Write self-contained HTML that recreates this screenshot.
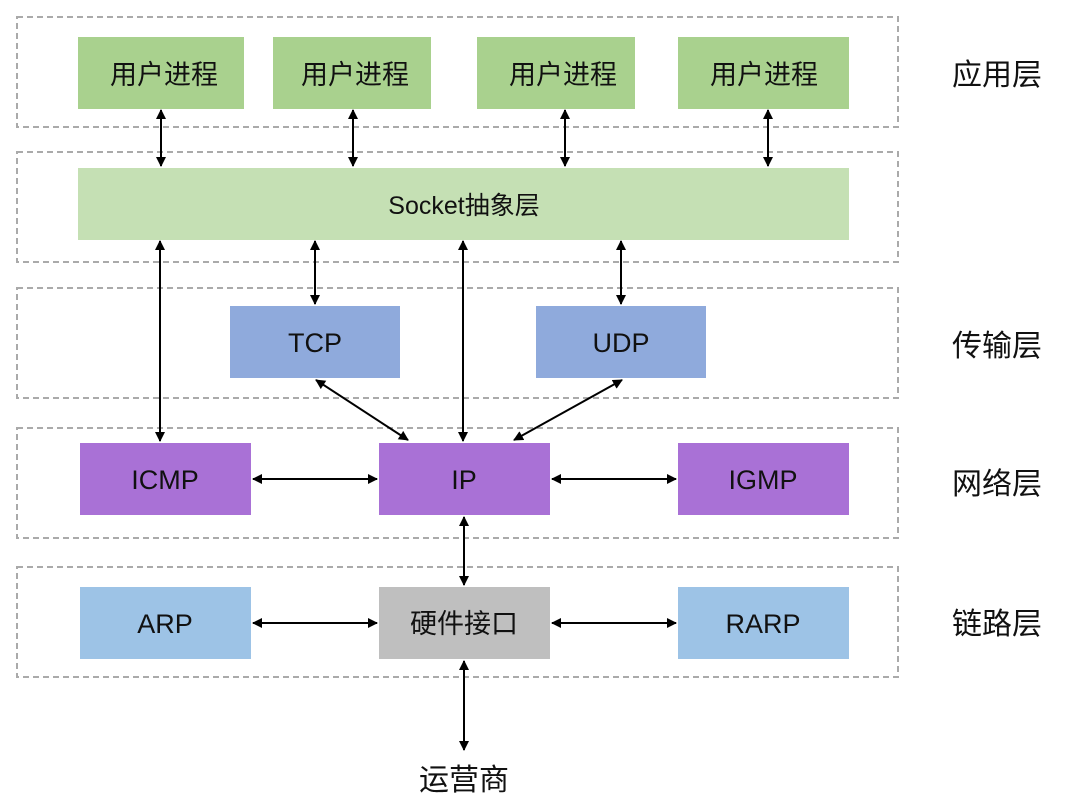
<!DOCTYPE html>
<html><head><meta charset="utf-8"><style>
html,body{margin:0;padding:0;background:#fff;}
svg{display:block;}
text{font-family:"Liberation Sans","Noto Sans CJK SC",sans-serif;fill:#111;}
</style></head><body>
<svg width="1074" height="810" viewBox="0 0 1074 810" xmlns="http://www.w3.org/2000/svg">
<defs>
<marker id="a" viewBox="0 0 10 10" refX="9" refY="5" markerWidth="10" markerHeight="10" markerUnits="userSpaceOnUse" orient="auto-start-reverse"><path d="M0,0 L10,5 L0,10 z" fill="#000"/></marker>
</defs>
<g fill="none" stroke="#aaa" stroke-width="2" stroke-dasharray="6,4">
<rect x="17" y="17" width="881" height="110"/>
<rect x="17" y="152" width="881" height="110"/>
<rect x="17" y="288" width="881" height="110"/>
<rect x="17" y="428" width="881" height="110"/>
<rect x="17" y="567" width="881" height="110"/>
</g>
<g>
<rect x="78" y="37" width="166" height="72" fill="#a9d18e"/>
<rect x="273" y="37" width="158" height="72" fill="#a9d18e"/>
<rect x="477" y="37" width="158" height="72" fill="#a9d18e"/>
<rect x="678" y="37" width="171" height="72" fill="#a9d18e"/>
<rect x="78" y="168" width="771" height="72" fill="#c5e0b4"/>
<rect x="230" y="306" width="170" height="72" fill="#8faadc"/>
<rect x="536" y="306" width="170" height="72" fill="#8faadc"/>
<rect x="80" y="443" width="171" height="72" fill="#a971d6"/>
<rect x="379" y="443" width="171" height="72" fill="#a971d6"/>
<rect x="678" y="443" width="171" height="72" fill="#a971d6"/>
<rect x="80" y="587" width="171" height="72" fill="#9dc3e6"/>
<rect x="379" y="587" width="171" height="72" fill="#bfbfbf"/>
<rect x="678" y="587" width="171" height="72" fill="#9dc3e6"/>
</g>
<g stroke="#000" stroke-width="2" marker-start="url(#a)" marker-end="url(#a)">
<line x1="161" y1="110" x2="161" y2="166"/>
<line x1="353" y1="110" x2="353" y2="166"/>
<line x1="565" y1="110" x2="565" y2="166"/>
<line x1="768" y1="110" x2="768" y2="166"/>
<line x1="160" y1="241" x2="160" y2="441"/>
<line x1="315" y1="241" x2="315" y2="304"/>
<line x1="463" y1="241" x2="463" y2="441"/>
<line x1="621" y1="241" x2="621" y2="304"/>
<line x1="316" y1="380" x2="408" y2="440"/>
<line x1="622" y1="380" x2="514" y2="440"/>
<line x1="253" y1="479" x2="377" y2="479"/>
<line x1="552" y1="479" x2="676" y2="479"/>
<line x1="464" y1="517" x2="464" y2="585"/>
<line x1="253" y1="623" x2="377" y2="623"/>
<line x1="552" y1="623" x2="676" y2="623"/>
<line x1="464" y1="661" x2="464" y2="750"/>
</g>
<g font-size="27" text-anchor="middle">
<text x="164" y="84">用户进程</text>
<text x="355" y="84">用户进程</text>
<text x="563" y="84">用户进程</text>
<text x="764" y="84">用户进程</text>
<text x="464" y="214" font-size="25">Socket抽象层</text>
<text x="315" y="352">TCP</text>
<text x="621" y="352">UDP</text>
<text x="165" y="489">ICMP</text>
<text x="464" y="489">IP</text>
<text x="763" y="489">IGMP</text>
<text x="165" y="633">ARP</text>
<text x="464" y="633">硬件接口</text>
<text x="763" y="633">RARP</text>
</g>
<g font-size="30" text-anchor="middle">
<text x="997" y="85">应用层</text>
<text x="997" y="356">传输层</text>
<text x="997" y="494">网络层</text>
<text x="997" y="634">链路层</text>
<text x="464" y="790">运营商</text>
</g>
</svg>
</body></html>
